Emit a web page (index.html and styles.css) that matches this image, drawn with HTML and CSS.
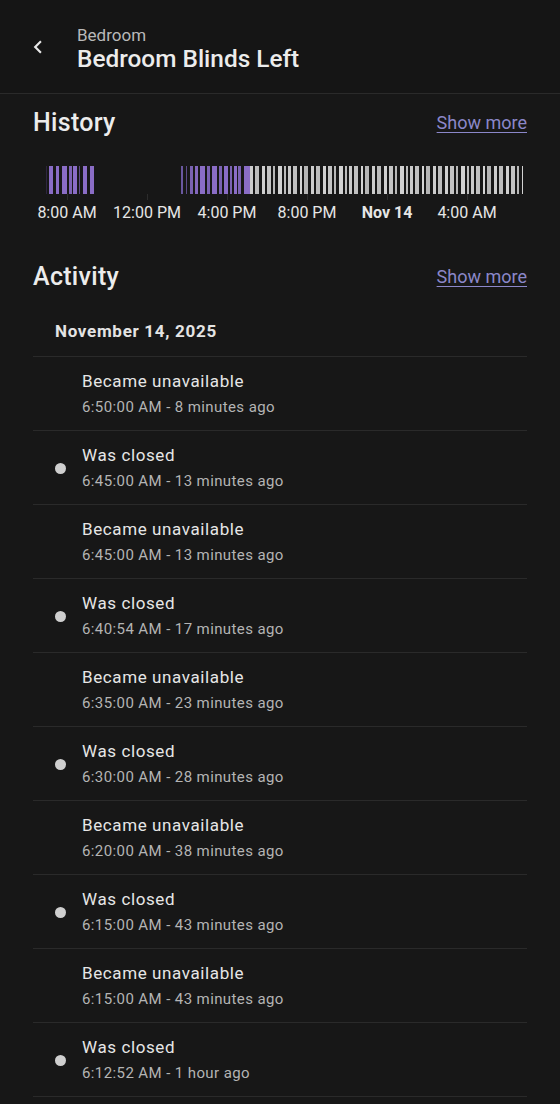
FILE: index.html
```html
<!DOCTYPE html>
<html lang="en">
<head>
    <meta charset="UTF-8">
    <meta name="viewport" content="width=device-width, initial-scale=1.0">
    <title>Bedroom Blinds Left</title>
    <link rel="stylesheet" href="styles.css">
</head>
<body>

    <header class="topbar">
        <button class="back" aria-label="Back">
            <svg viewBox="0 0 24 24" width="24" height="24"><path d="M15.4 7.4 14 6l-6 6 6 6 1.4-1.4L10.8 12z" fill="#e8e8e8"/></svg>
        </button>
        <div class="titles">
            <div class="area">Bedroom</div>
            <h1 class="name">Bedroom Blinds Left</h1>
        </div>
    </header>

    <main class="content">
        <section class="history">
            <div class="section-head">
                <h2>History</h2>
                <a href="#" class="more">Show more</a>
            </div>
            <div class="timeline">
                <div class="bar">
                    <div class="seg seg-open1"></div>
                    <div class="seg seg-gap"></div>
                    <div class="seg seg-open2"></div>
                    <div class="seg seg-closed"></div>
                </div>
                <div class="axis">
                    <span>8:00 AM</span>
                    <span>12:00 PM</span>
                    <span>4:00 PM</span>
                    <span>8:00 PM</span>
                    <span class="day">Nov 14</span>
                    <span>4:00 AM</span>
                </div>
            </div>
        </section>

        <section class="activity">
            <div class="section-head">
                <h2>Activity</h2>
                <a href="#" class="more">Show more</a>
            </div>
            <div class="date">November 14, 2025</div>
            <ul class="log">
                <li class="entry"><span></span><div><div class="what">Became unavailable</div><div class="when">6:50:00 AM - 8 minutes ago</div></div></li>
                <li class="entry"><span class="dot"></span><div><div class="what">Was closed</div><div class="when">6:45:00 AM - 13 minutes ago</div></div></li>
                <li class="entry"><span></span><div><div class="what">Became unavailable</div><div class="when">6:45:00 AM - 13 minutes ago</div></div></li>
                <li class="entry"><span class="dot"></span><div><div class="what">Was closed</div><div class="when">6:40:54 AM - 17 minutes ago</div></div></li>
                <li class="entry"><span></span><div><div class="what">Became unavailable</div><div class="when">6:35:00 AM - 23 minutes ago</div></div></li>
                <li class="entry"><span class="dot"></span><div><div class="what">Was closed</div><div class="when">6:30:00 AM - 28 minutes ago</div></div></li>
                <li class="entry"><span></span><div><div class="what">Became unavailable</div><div class="when">6:20:00 AM - 38 minutes ago</div></div></li>
                <li class="entry"><span class="dot"></span><div><div class="what">Was closed</div><div class="when">6:15:00 AM - 43 minutes ago</div></div></li>
                <li class="entry"><span></span><div><div class="what">Became unavailable</div><div class="when">6:15:00 AM - 43 minutes ago</div></div></li>
                <li class="entry"><span class="dot"></span><div><div class="what">Was closed</div><div class="when">6:12:52 AM - 1 hour ago</div></div></li>
            </ul>
        </section>
    </main>

</body>
</html>
```

FILE: styles.css
```css
body{
    margin: 0;
    background-color: #171717;
    color: #e4e4e4;
    font-family: Roboto, "Noto Sans", sans-serif;
    overflow: hidden;
}
.topbar{
    height: 93px;
    display: flex;
    align-items: center;
    border-bottom: 1px solid #2a2a2a;
    background-color: #151515;
}
.back{
    background: none;
    border: none;
    padding: 0;
    margin: 0 15px 0 26px;
    width: 24px;
    height: 24px;
    display: flex;
}
.back svg{
    transform: scale(1.08);
}
.titles{
    margin-left: 12px;
    margin-top: 4px;
}
.area{
    font-size: 17px;
    line-height: 20px;
    color: #b9b9b9;
}
.name{
    margin: 0;
    font-size: 24.4px;
    line-height: 28px;
    font-weight: 500;
    color: #ececec;
}
.content{
    padding: 0 33px;
}
.history{
    padding-top: 12px;
}
.section-head{
    display: flex;
    justify-content: space-between;
    align-items: center;
    height: 32px;
}
h2{
    margin: 0;
    font-size: 25px;
    font-weight: 500;
    color: #ececec;
    letter-spacing: 0.3px;
}
.more{
    color: #8b87c9;
    font-size: 18px;
    text-underline-offset: 3px;
}
.timeline{
    margin-top: 28px;
}
.bar{
    display: flex;
    height: 28px;
    margin: 0 4px 0 13px;
}
.seg-open1{
    width: 48px;
    background: repeating-linear-gradient(90deg,
        #2e2640 0 1px, transparent 1px 3px,
        #8a6dc6 3px 7px, transparent 7px 10px,
        #8a6dc6 10px 13px, transparent 13px 16px,
        #8a6dc6 16px 21px, transparent 21px 23px,
        #7e63b6 23px 26px, transparent 26px 27px,
        #8a6dc6 27px 31px, transparent 31px 33px,
        #5e4b86 33px 34px, transparent 34px 37px,
        #8a6dc6 37px 41px, transparent 41px 44px,
        #8a6dc6 44px 48px);
}
.seg-gap{
    width: 87px;
}
.seg-open2{
    width: 69px;
    background: repeating-linear-gradient(90deg,
        #6a58a0 0 2px, transparent 2px 5px,
        #5c4b88 5px 6px, transparent 6px 9px,
        #7a62b2 9px 12px, transparent 12px 14px,
        #8468bd 14px 17px, transparent 17px 19px,
        #8a6dc6 19px 24px, transparent 24px 26px,
        #7a62b2 26px 29px, transparent 29px 31px,
        #8a6dc6 31px 36px, transparent 36px 38px,
        #7a62b2 38px 41px, transparent 41px 43px,
        #8a6dc6 43px 47px, transparent 47px 49px,
        #7a62b2 49px 51px, transparent 51px 53px,
        #8a6dc6 53px 56px, transparent 56px 57px,
        #7a62b2 57px 60px, transparent 60px 63px,
        #8a6dc6 63px 69px);
}
.seg-closed{
    flex: 1;
    background: repeating-linear-gradient(90deg,
        #cdcdcd 0 3px, transparent 3px 5px,
        #bdbdbd 5px 9px, transparent 9px 12px,
        #d0d0d0 12px 15px, transparent 15px 17px,
        #c4c4c4 17px 21px, transparent 21px 23px,
        #b8b8b8 23px 25px, transparent 25px 28px,
        #d2d2d2 28px 32px, transparent 32px 34px,
        #bcbcbc 34px 36px, transparent 36px 38px,
        #cacaca 38px 41px, transparent 41px 43px,
        #c0c0c0 43px 47px, transparent 47px 50px,
        #d4d4d4 50px 52px, transparent 52px 54px,
        #b5b5b5 54px 58px, transparent 58px 61px);
}
.axis{
    display: grid;
    grid-template-columns: repeat(6, 80px);
    margin: 9px 0 0 -6px;
    font-size: 16px;
    line-height: 20px;
    color: #e6e6e6;
    text-align: center;
}
.axis span{
    position: relative;
}
.axis span::before{
    content: "";
    position: absolute;
    left: 40px;
    top: -9px;
    width: 1px;
    height: 6px;
    background-color: #2c2c2c;
}
.axis .day{
    font-weight: 700;
}
.activity{
    margin-top: 37px;
}
.date{
    padding: 27px 22px 13px;
    font-size: 17px;
    line-height: 24px;
    font-weight: 700;
    letter-spacing: 0.7px;
    border-bottom: 1px solid #2a2a2a;
}
.log{
    list-style: none;
    margin: 0;
    padding: 0;
}
.entry{
    display: grid;
    grid-template-columns: 49px 1fr;
    align-items: center;
    padding: 14px 0 13px;
    border-bottom: 1px solid #2a2a2a;
}
.dot{
    width: 11px;
    height: 11px;
    margin-left: 22px;
    border-radius: 50%;
    background-color: #cfcfcf;
}
.what{
    font-size: 17px;
    line-height: 20px;
    letter-spacing: 0.6px;
    color: #e6e6e6;
}
.when{
    margin-top: 6px;
    font-size: 15px;
    line-height: 20px;
    letter-spacing: 0.4px;
    color: #b4b4b4;
}
```
